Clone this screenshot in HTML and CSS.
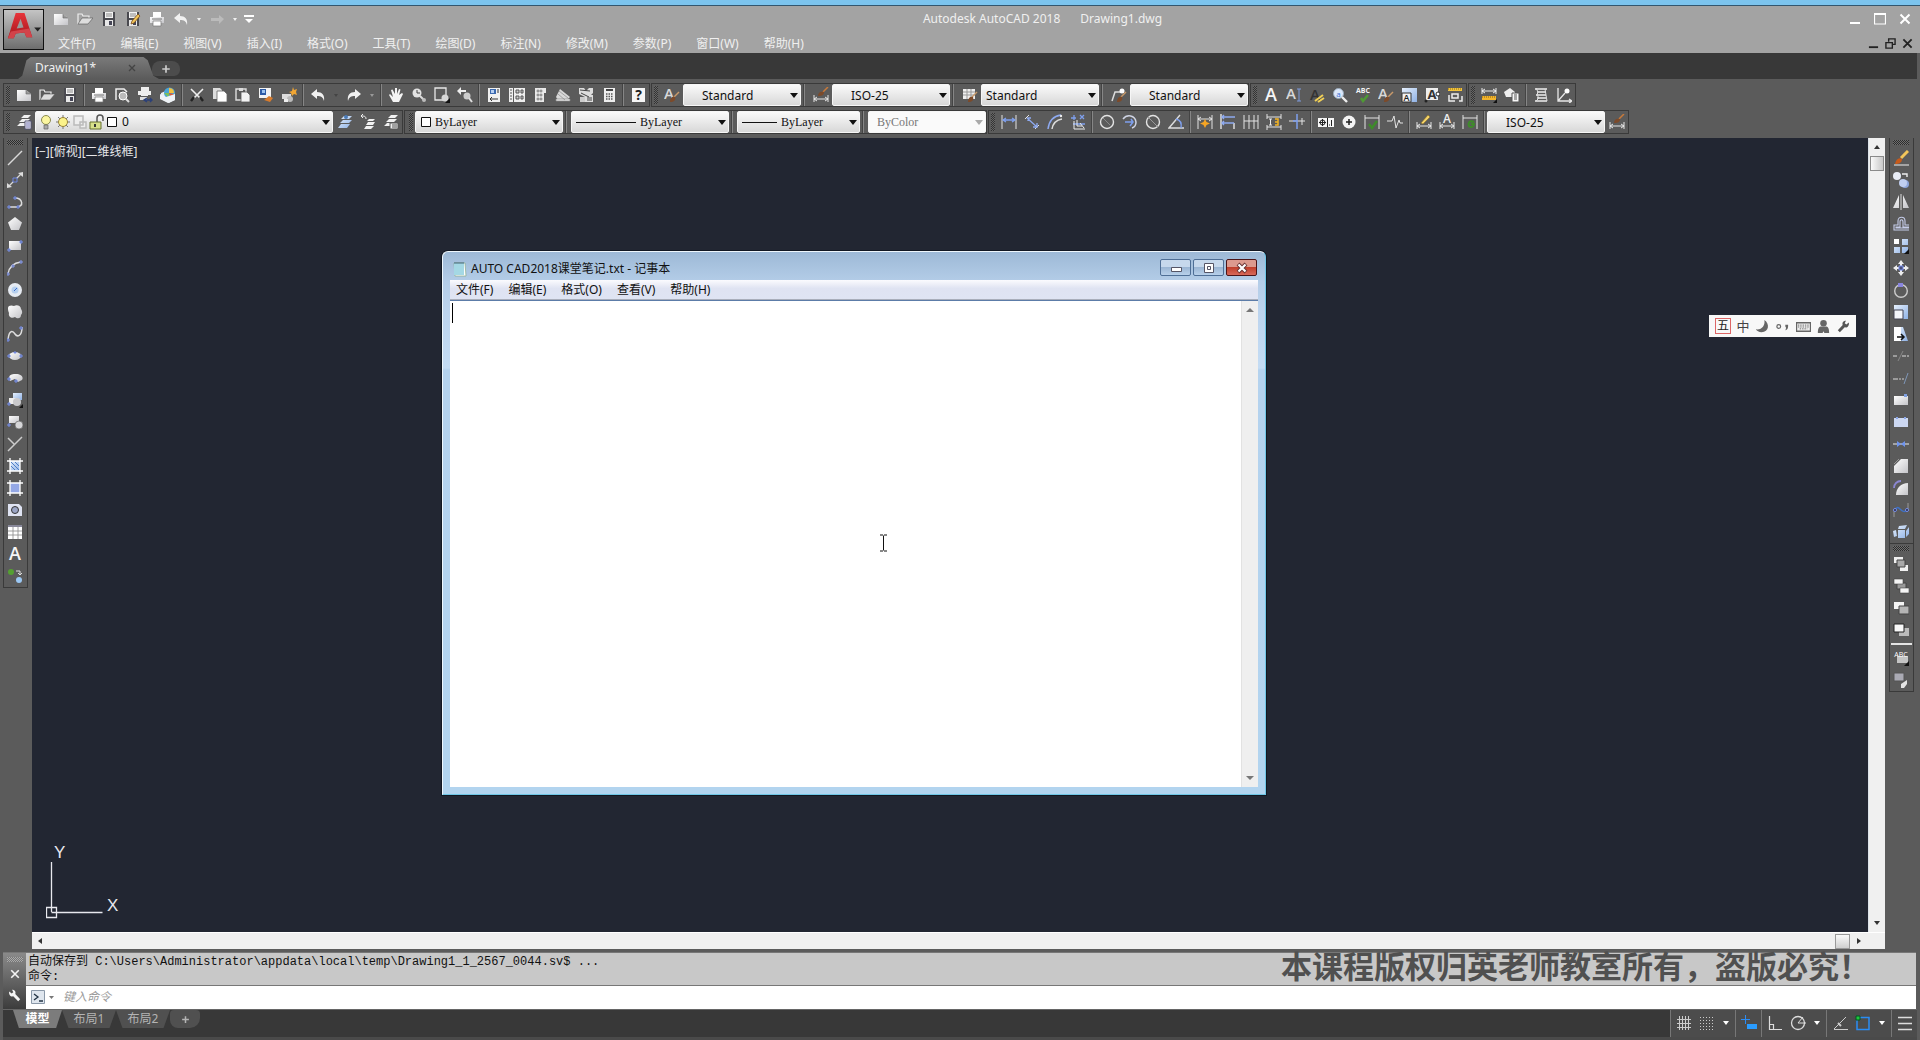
FILE: index.html
```html
<!DOCTYPE html>
<html lang="zh-CN">
<head>
<meta charset="utf-8">
<title>Autodesk AutoCAD 2018 - Drawing1.dwg</title>
<link rel="stylesheet" href="styles.css">
</head>
<body>
<svg class="paints" aria-hidden="true">
<defs>
<linearGradient id="gw" x1="0" y1="0" x2="1" y2="1"><stop offset="0" stop-color="#fff"/><stop offset="1" stop-color="#c4c4c8"/></linearGradient>
<linearGradient id="gb" x1="0" y1="0" x2="1" y2="1"><stop offset="0" stop-color="#e6f0fc"/><stop offset="1" stop-color="#8fb2e6"/></linearGradient>
<linearGradient id="gr" x1="0" y1="0" x2="0" y2="1"><stop offset="0" stop-color="#e8343a"/><stop offset="1" stop-color="#a3151c"/></linearGradient>
</defs>
</svg>
<svg class="symbols" aria-hidden="true">
<symbol id="new" viewBox="0 0 16 16"><path d="M1 3h9l5 4v7H1z" fill="url(#gw)"/><path d="M10 3v4h5" fill="#999" stroke="#666" stroke-width=".6"/></symbol>
<symbol id="open" viewBox="0 0 16 16"><path d="M1 13V3h4l1 2h6v2" fill="none" stroke="#eee" stroke-width="1.200"/><path d="M1 13l4-6h11l-5 6z" fill="#ddd" stroke="#555" stroke-width=".6"/></symbol>
<symbol id="save" viewBox="0 0 16 16"><path d="M2 1h12v14H2z" fill="#4a4a50"/><path d="M4 1h8v6H4z" fill="#f4f4f4"/><path d="M5 3h6M5 5h6" stroke="#888"/><path d="M4 9h8v6H4z" fill="#e8e8e8"/><path d="M8 10h3v4H8z" fill="#445"/></symbol>
<symbol id="saveas" viewBox="0 0 16 16"><use href="#save"/><path d="M7 10l6-7 2 2-6 7-3 1z" fill="#f0c55a" stroke="#7a4b1a" stroke-width=".8"/></symbol>
<symbol id="print" viewBox="0 0 16 16"><path d="M4 1h8v5H4z" fill="#fff"/><path d="M1 6h14v6H1z" fill="url(#gw)"/><path d="M3 8h10" stroke="#777"/><path d="M4 10h8v5H4z" fill="#fff" stroke="#777" stroke-width=".7"/></symbol>
<symbol id="undo" viewBox="0 0 16 16"><path d="M1 7l6-5v3c5 0 8 3 7 9-1-4-3-5-7-5v3z" fill="#f1f1f1"/></symbol>
<symbol id="redo" viewBox="0 0 16 16"><path d="M15 7L9 2v3C4 5 1 8 2 14c1-4 3-5 7-5v3z" fill="#f1f1f1"/></symbol>
<symbol id="redo2" viewBox="0 0 16 16"><path d="M15 8l-5-4v3H2v3h8v3z" fill="#bbb"/></symbol>
<symbol id="dn" viewBox="0 0 8 8"><path d="M1 2h6L4 6z" fill="currentColor"/></symbol>
<symbol id="dot" viewBox="0 0 8 8"><path d="M2 3h4L4 6z" fill="currentColor"/></symbol>
<symbol id="qat" viewBox="0 0 12 12"><path d="M1 2h10v2H1zM2 6h8l-4 4z" fill="#fff"/></symbol>
<symbol id="preview" viewBox="0 0 16 16"><path d="M2 13V2h8l3 3" fill="none" stroke="#eee" stroke-width="1.500"/><circle cx="9" cy="9" r="4" fill="#bbb" stroke="#fff"/><path d="M12 12l3 3" stroke="#ddd" stroke-width="2"/></symbol>
<symbol id="publish" viewBox="0 0 16 16"><path d="M4 0h8v4H4zM1 4h13v4H1zM4 8h7v1H4z" fill="#eee"/><path d="M3 10h7v3H3z" fill="#ddd"/><path d="M8 13h6M10 11l-3 2 3 2M13 11l2 2-2 2" fill="none" stroke="#2a3f78" stroke-width="1.400"/></symbol>
<symbol id="print3d" viewBox="0 0 16 16"><path d="M1 6l7-3 7 3v7l-6 3-8-4z" fill="#e8eef4"/><circle cx="9.500" cy="6" r="5.500" fill="#49a5d8"/><path d="M9 1c4 0 5 3 5 5L9 6z" fill="#f3c13d"/><path d="M9 6l5 1-3 4z" fill="#d6583a"/><path d="M4 6h5v5z" fill="#7bbf5a"/><path d="M0 7l6 3 9-3v6l-7 3-8-4z" fill="#eef2f6"/></symbol>
<symbol id="cut" viewBox="0 0 16 16"><path d="M2 2l9 9M14 2L5 11" stroke="#eee" stroke-width="1.600"/><path d="M5 10l-3 4M11 10l3 4" stroke="#222" stroke-width="2.400"/></symbol>
<symbol id="copy" viewBox="0 0 16 16"><path d="M1 1h7l2 2v9H1z" fill="#ddd"/><path d="M5 4h7l3 3v8H5z" fill="#fff" stroke="#666" stroke-width=".8"/></symbol>
<symbol id="paste" viewBox="0 0 16 16"><path d="M1 2h10v11H1z" fill="none" stroke="#ddd" stroke-width="1.400"/><path d="M4 1h4v3H4z" fill="#ddd"/><path d="M6 5h6l3 3v7H6z" fill="#f2f2f2" stroke="#555" stroke-width=".8"/></symbol>
<symbol id="match" viewBox="0 0 16 16"><path d="M1 1h12v10H1z" fill="#f3f3f3"/><path d="M2 2h6v6H2z" fill="#2c5aa5"/><path d="M4 3h3v3H4z" fill="#9cc3ee"/><path d="M6 13l5-4 4 2-3 4z" fill="#d77b2c"/></symbol>
<symbol id="bedit" viewBox="0 0 16 16"><path d="M1 7h9v5H1z" fill="#ddd"/><circle cx="9" cy="12" r="3" fill="#bbb"/><path d="M12 0l1 3 3-1-1 3 1 3-3-1-2 2-1-3-2-1 3-1z" fill="#f1a634"/><path d="M3 12h4v3H3z" fill="#eee"/></symbol>
<symbol id="pan" viewBox="0 0 16 16"><path d="M5 15L1 8l1-1 3 3L3 3l1.500-.5L7 7V1h2v6l2-5 1.500.5L11 8l3-2 1 1-4 8z" fill="#f4f4f4"/></symbol>
<symbol id="zoomrt" viewBox="0 0 16 16"><circle cx="6" cy="6" r="4.500" fill="#e2e2e2"/><path d="M6 3v3h3" stroke="#444" fill="none"/><path d="M9 9l4 4" stroke="#ddd" stroke-width="2"/><circle cx="13" cy="13" r="2" fill="#bbb"/></symbol>
<symbol id="zoomwin" viewBox="0 0 16 16"><path d="M1 1h11v12H1z" fill="none" stroke="#e8e8e8" stroke-width="1.300"/><circle cx="11" cy="11" r="3.500" fill="#d6d6d6"/><path d="M11 16h5v-5z" fill="#111"/></symbol>
<symbol id="zoomprev" viewBox="0 0 16 16"><path d="M0 4l4-4v3h5v2H4v3z" fill="#eee"/><circle cx="10" cy="9" r="3.500" fill="#ccc"/><path d="M12 11l3 4" stroke="#ddd" stroke-width="2"/></symbol>
<symbol id="props" viewBox="0 0 16 16"><path d="M2 1h12v14H2z" fill="#f0f0f0"/><path d="M4 2h6v5H4z" fill="#3b69b0"/><path d="M5 3h3v3H5z" fill="#b7d0f2"/><path d="M11 3h2M11 5h2M4 12h8M4 12l2-2M4 12l2 2" stroke="#333" fill="none"/></symbol>
<symbol id="dc" viewBox="0 0 16 16"><path d="M0 1h4v14H0zM5 1h11v14H5z" fill="#eee"/><path d="M1 3h2M1 6h2M1 9h2M1 12h2M7 3h3v3H7zM12 3h2v3h-2zM7 9h3v3H7zM12 9h2v3h-2z" fill="#ccc" stroke="#555"/></symbol>
<symbol id="tp" viewBox="0 0 16 16"><path d="M3 1h11v5h-2v9H3z" fill="#e8e8e8"/><path d="M5 3h2v2H5zM8 3h2v2H8zM5 7h2v2H5zM8 7h2v2H8zM5 11h2v2H5zM8 11h2v2H8z" fill="#aaa" stroke="#777" stroke-width=".5"/></symbol>
<symbol id="sheet" viewBox="0 0 16 16"><path d="M1 10l4-8 10 8-3 3H3z" fill="#d8d8d8"/><path d="M4 4l9 7M3 7l7 6M1 12h14v2H1z" fill="#f2f2f2" stroke="#888" stroke-width=".7"/></symbol>
<symbol id="markup" viewBox="0 0 16 16"><path d="M1 1h5l2 3 3-3h4v5l-2 2h2v7H7v-5L1 7z" fill="#ddd"/><path d="M2 3l10 1M3 6l8 4M9 11h5M9 13h5" fill="none" stroke="#444"/><path d="M2 10h5v5H2z" fill="#ccc"/></symbol>
<symbol id="calc" viewBox="0 0 16 16"><path d="M3 1h11v14H3z" fill="#eee"/><path d="M5 3h7" stroke="#444" stroke-width="2"/><path d="M5 7h7M5 9.500h7M5 12h7" stroke="#555" stroke-width="1.400" stroke-dasharray="1.500 1"/></symbol>
<symbol id="help" viewBox="0 0 16 16"><path d="M2 1h13v14H2z" fill="#f6f6f6"/><text x="8.500" y="13" text-anchor="middle" font-family="Open Sans, sans-serif" font-weight="700" font-size="14" fill="#222">?</text></symbol>
<symbol id="bigA" viewBox="0 0 16 16"><text x="8" y="14" text-anchor="middle" font-family="Open Sans, sans-serif" font-weight="600" font-size="18" fill="#f6f6f6">A</text></symbol>
<symbol id="smA" viewBox="0 0 16 16"><text x="5" y="12" text-anchor="middle" font-family="Open Sans, sans-serif" font-weight="600" font-size="15" fill="#d8d8d8">A</text></symbol>
<symbol id="brush" viewBox="0 0 16 16"><path d="M15 5l-5 5" stroke="#c99a6a" stroke-width="1.500"/><path d="M6 15c0-4 2-6 5-5 1 3-1 5-5 5z" fill="#7c4a2a"/></symbol>
<symbol id="tstyle" viewBox="0 0 16 16"><use href="#smA"/><use href="#brush"/></symbol>
<symbol id="dim" viewBox="0 0 16 16"><path d="M1 8v7M15 8v7M1 12h14M4 10l-3 2 3 2M12 10l3 2-3 2" fill="none" stroke="#e8e8e8"/></symbol>
<symbol id="dimstyle" viewBox="0 0 16 16"><use href="#dim"/><path d="M15 0l-5 5" stroke="#c97a3a" stroke-width="1.500"/><path d="M5 9c0-4 3-5 6-4 0 3-2 4-6 4z" fill="#7c4a2a"/></symbol>
<symbol id="tbstyle" viewBox="0 0 16 16"><path d="M1 2h12v10H1z" fill="#eee"/><path d="M1 5h12M1 8h12M5 2v10M9 2v10" stroke="#999"/><use href="#brush"/></symbol>
<symbol id="mlstyle" viewBox="0 0 16 16"><path d="M1 14L4 5h6" fill="none" stroke="#ddd" stroke-width="1.500"/><circle cx="11" cy="4" r="2.500" fill="#fff"/><use href="#brush"/></symbol>
<symbol id="text1" viewBox="0 0 16 16"><use href="#smA"/><path d="M11 2h4M13 2v12M11 14h4" stroke="#7e9bdc" fill="none"/></symbol>
<symbol id="tedit" viewBox="0 0 16 16"><text x="6" y="13" text-anchor="middle" font-family="Open Sans, sans-serif" font-weight="600" font-size="15" fill="#333">A</text><path d="M6 14l8-6M9 15l6-4" stroke="#f0cf56" stroke-width="2"/></symbol>
<symbol id="find" viewBox="0 0 16 16"><circle cx="6.500" cy="6.500" r="5" fill="#dce8fb" stroke="#9ab"/><text x="6.500" y="9.500" text-anchor="middle" font-family="Open Sans, sans-serif" font-size="8" fill="#3d6fd0">a</text><path d="M10 10l5 5" stroke="#eee" stroke-width="2.400"/></symbol>
<symbol id="spell" viewBox="0 0 16 16"><text x="8" y="6" text-anchor="middle" font-family="Open Sans, sans-serif" font-weight="700" font-size="7" fill="#f4f4f4">ABC</text><path d="M6 11l2 3 5-6" fill="none" stroke="#4f9a35" stroke-width="2.500"/></symbol>
<symbol id="tscale" viewBox="0 0 16 16"><path d="M1 1h15v14H8V8H1z" fill="url(#gb)"/><path d="M1 6h9v9H1z" fill="#f2f2f2" stroke="#333"/><text x="5.500" y="13.500" text-anchor="middle" font-family="Open Sans, sans-serif" font-weight="600" font-size="9" fill="#222">A</text></symbol>
<symbol id="tjust" viewBox="0 0 16 16"><path d="M2 1h12v12H2z" fill="#eee"/><text x="8" y="12" text-anchor="middle" font-family="Open Sans, sans-serif" font-weight="700" font-size="13" fill="#333">A</text><circle cx="14" cy="7" r="2" fill="#fff" stroke="#222"/><circle cx="2" cy="14" r="1.500" fill="#222"/></symbol>
<symbol id="tconv" viewBox="0 0 16 16"><path d="M1 1h14v3H1z" fill="#f3c43c"/><path d="M1 2h14" stroke="#8a6a14" stroke-dasharray="1 1"/><path d="M2 8v6h6M5 7h6v4H5zM12 14h3V9" fill="none" stroke="#eee" stroke-width="1.500"/></symbol>
<symbol id="dist" viewBox="0 0 16 16"><path d="M1 1v6M15 1v6M1 4h14M4 2L1 4l3 2M12 2l3 2-3 2" fill="none" stroke="#eee"/><path d="M1 9h14v4H1z" fill="#f3b52c"/><path d="M1 10h14" stroke="#8a6214" stroke-dasharray="1 1"/><path d="M12 16h4v-4z" fill="#111"/></symbol>
<symbol id="massp" viewBox="0 0 16 16"><path d="M0 5l6-4 5 4v5H2z" fill="#eee"/><path d="M8 6h7v9H8z" fill="#f8f8f8" stroke="#555"/><path d="M10 8h3M10 10h3M10 12h3" stroke="#555"/></symbol>
<symbol id="list" viewBox="0 0 16 16"><path d="M2 2h12M4 5h9M3 8h10M4 11h9M2 14h12" stroke="#eee" stroke-width="1.600"/><path d="M3 1l2 4-1 3 2 3-3 3M12 2l1 6 1 6" stroke="#ddd" fill="none"/></symbol>
<symbol id="idp" viewBox="0 0 16 16"><path d="M2 1v13h13M2 14L9 6M13 12l3 2-3 2" fill="none" stroke="#e8e8e8" stroke-width="1.300"/><circle cx="11" cy="4" r="2.500" fill="#fff"/></symbol>
<symbol id="layers" viewBox="0 0 16 16"><path d="M5 4l3-3h7l-3 3zM3 8l3-3h8l-3 3zM1 12l3-3h8l-3 3z" fill="#f1f1f1"/></symbol>
<symbol id="layprop" viewBox="0 0 16 16"><use href="#layers"/><path d="M9 7h6v8H9z" fill="#fff" stroke="#557"/><path d="M10 9h4M10 11h4M10 13h4" stroke="#66a"/></symbol>
<symbol id="laycur" viewBox="0 0 16 16"><path d="M4 5l3-3h8l-3 3zM3 9l3-3h9l-3 3zM1 14l3-4h9l-3 4z" fill="url(#gb)"/><circle cx="9" cy="3" r="2" fill="#4b7bb8"/></symbol>
<symbol id="layprev" viewBox="0 0 16 16"><path d="M7 7l2-2h6l-2 2zM6 11l2-3h7l-2 3zM4 15l2-3h8l-3 3z" fill="#f1f1f1"/><path d="M6 5C6 2 4 2 1 2l2-2M1 2l2 2" fill="none" stroke="#eee"/></symbol>
<symbol id="laystate" viewBox="0 0 16 16"><use href="#layers"/><path d="M7 9h8v6H7z" fill="#eee" stroke="#555"/><path d="M9 11h5M9 13h5" stroke="#555"/></symbol>
<symbol id="bulb" viewBox="0 0 16 16"><circle cx="8" cy="6" r="4.500" fill="#fbf6a0" stroke="#8a8a50"/><path d="M6 11h4v4H6z" fill="#aaa" stroke="#666" stroke-width=".7"/></symbol>
<symbol id="sun" viewBox="0 0 16 16"><path d="M8 1v14M1 8h14M3 3l10 10M13 3L3 13" stroke="#777"/><circle cx="8" cy="8" r="4.500" fill="#fbf28a" stroke="#99853a"/></symbol>
<symbol id="vpf" viewBox="0 0 16 16"><path d="M2 2h9v9H2zM8 8h6v6H8z" fill="#eee" stroke="#bbb" stroke-width="1.500"/></symbol>
<symbol id="lock" viewBox="0 0 16 16"><path d="M8 8V4c0-4 6-4 6 0v3" fill="none" stroke="#555" stroke-width="1.500"/><path d="M1 8h11v7H1z" fill="#d8e08a" stroke="#667030"/><path d="M6 10v3" stroke="#333" stroke-width="2"/></symbol>
<symbol id="swatch" viewBox="0 0 12 12"><path d="M1.500 1.500h9v9h-9z" fill="#fff" stroke="#111"/></symbol>
<symbol id="d1" viewBox="0 0 16 16"><path d="M1 1v14M15 1v14" stroke="#e4e4e4"/><path d="M2 6h12M5 4L2 6l3 2M11 4l3 2-3 2" fill="none" stroke="#7fa0ee" stroke-width="1.300"/></symbol>
<symbol id="d2" viewBox="0 0 16 16"><path d="M1 5l4-4M11 15l4-4" stroke="#e4e4e4"/><path d="M3 4l10 9M4 7V4h3M13 9v4h-4" fill="none" stroke="#8eaaf0" stroke-width="1.300"/></symbol>
<symbol id="d3" viewBox="0 0 16 16"><path d="M1 15C2 7 7 2 14 1" fill="none" stroke="#8eaaf0" stroke-width="1.500"/><path d="M5 15c1-6 4-9 10-10" fill="none" stroke="#ddd" stroke-width="1.500"/><circle cx="14" cy="2" r="1.200" fill="#eee"/></symbol>
<symbol id="d4" viewBox="0 0 16 16"><path d="M1 4h5M4 1v5M10 1l4 4M14 1l-4 4M3 10h12" stroke="#7fa0ee" stroke-width="1.300"/><path d="M4 7v8h11M7 6v6h5M10 9l4 5" fill="none" stroke="#eee"/></symbol>
<symbol id="d5" viewBox="0 0 16 16"><circle cx="8" cy="8" r="6.500" fill="none" stroke="#e4e4e4" stroke-width="1.400"/><path d="M4 4l7 7" stroke="#8a8a8a"/></symbol>
<symbol id="d6" viewBox="0 0 16 16"><path d="M1 5c4-5 12-4 13 3 0 3-1 5-4 6" fill="none" stroke="#cfd4e4" stroke-width="1.500"/><path d="M3 8h7M9 5l2 3-3 4" fill="none" stroke="#7fa0ee" stroke-width="1.500"/></symbol>
<symbol id="d7" viewBox="0 0 16 16"><circle cx="8" cy="8" r="6.500" fill="none" stroke="#e4e4e4" stroke-width="1.400"/><path d="M3 3l10 10" stroke="#9a9a9a"/></symbol>
<symbol id="d8" viewBox="0 0 16 16"><path d="M12 1L1 14h15" fill="none" stroke="#ddd" stroke-width="1.400"/><path d="M8 5c4 1 6 4 5 9" fill="none" stroke="#7fa0ee" stroke-width="1.400"/></symbol>
<symbol id="d9" viewBox="0 0 16 16"><path d="M1 1v14M15 1v14M1 5h14M4 3L1 5l3 2M12 3l3 2-3 2" fill="none" stroke="#e4e4e4"/><path d="M8 5l1.500 3L13 9.500 9.500 11 8 14l-1.500-3L3 9.500 6.500 8z" fill="#f5a524"/></symbol>
<symbol id="d10" viewBox="0 0 16 16"><path d="M1 0v15M14 9v6" stroke="#e4e4e4" stroke-width="1.400"/><path d="M2 3h13M2 9h12M4 1L2 3l2 2M4 7L2 9l2 2" fill="none" stroke="#8eaaf0" stroke-width="1.400"/></symbol>
<symbol id="d11" viewBox="0 0 16 16"><path d="M1 1v14M6 1v14M11 1v14M15 1v14M1 7h14" stroke="#e4e4e4"/></symbol>
<symbol id="d12" viewBox="0 0 16 16"><path d="M1 0v5M15 0v5M1 3h14M1 11v5M15 11v5M1 13h14" stroke="#e4e4e4"/><path d="M3 5h3M3 11h3M4.500 5v6" stroke="#eee"/><path d="M9 5h3v6H9M9 8h3" fill="none" stroke="#f5b524" stroke-width="1.500"/></symbol>
<symbol id="d13" viewBox="0 0 16 16"><path d="M0 7h16M13 4v7" stroke="#e4e4e4"/><path d="M8 0v15M4 7h4" stroke="#7fa0ee" stroke-width="1.500"/></symbol>
<symbol id="tol" viewBox="0 0 16 16"><path d="M0 4h16v9H0z" fill="#f6f6f6"/><circle cx="4.500" cy="8.500" r="2.500" fill="none" stroke="#222"/><path d="M4.500 5v7M1 8.500h7M9.500 4v9M11 11h1M13.500 6v6" stroke="#222"/></symbol>
<symbol id="ctr" viewBox="0 0 16 16"><circle cx="8" cy="8" r="6.500" fill="#f4f4f4"/><path d="M5 8h6M8 5v6" stroke="#222" stroke-width="1.500"/></symbol>
<symbol id="insp" viewBox="0 0 16 16"><path d="M1 1v14M15 1v14M1 4h14" stroke="#e4e4e4"/><path d="M5 10l3 4 5-7" fill="none" stroke="#3e8b2a" stroke-width="2.500"/></symbol>
<symbol id="jog" viewBox="0 0 16 16"><path d="M0 7h5l2-5 2 12 3-8 1 3h3" fill="none" stroke="#e4e4e4"/></symbol>
<symbol id="dedit" viewBox="0 0 16 16"><use href="#dim"/><path d="M5 9l7-8 2 2-7 7z" fill="#f3d36a" stroke="#8a6a14" stroke-width=".5"/></symbol>
<symbol id="dtedit" viewBox="0 0 16 16"><use href="#dim"/><text x="8" y="9" text-anchor="middle" font-family="Open Sans, sans-serif" font-weight="600" font-size="12" fill="#eee">A</text></symbol>
<symbol id="dupd" viewBox="0 0 16 16"><path d="M1 1v14M15 1v14M1 4h14" stroke="#e4e4e4"/><path d="M12 8c-5-2-6 1-5 4 2 2 5 1 5-2h-3" fill="none" stroke="#3e8b2a" stroke-width="2"/></symbol>
<symbol id="line" viewBox="0 0 16 16"><path d="M1 15L15 1" stroke="#d8d8d8" stroke-width="1.400"/></symbol>
<symbol id="xline" viewBox="0 0 16 16"><path d="M2 14L14 2" stroke="#d8d8d8" stroke-width="1.200"/><path d="M16 0v5l-5-4zM0 16v-5l5 4z" fill="#ddd"/><path d="M6 6h4v4H6z" fill="#5b5b5b" stroke="#6f86e0"/></symbol>
<symbol id="pline" viewBox="0 0 16 16"><path d="M1 13h9c7 0 6-9-2-9" fill="none" stroke="#ddd" stroke-width="1.500"/><path d="M1 12h2v2H1zM7 3h2v2H7zM10 12h2v2h-2z" fill="#566" stroke="#7a90ee"/></symbol>
<symbol id="poly" viewBox="0 0 16 16"><path d="M8 1l7 5.500L12 14H4L1 6.500z" fill="url(#gw)"/></symbol>
<symbol id="rect" viewBox="0 0 16 16"><path d="M2 3h12v9H2z" fill="url(#gw)"/><path d="M1 11h2v2H1zM13 3h2v2h-2z" fill="#566" stroke="#7a90ee"/></symbol>
<symbol id="arc" viewBox="0 0 16 16"><path d="M1 14C2 7 6 3 14 2" fill="none" stroke="#ddd" stroke-width="1.400"/><path d="M0 13h2v2H0zM5 5h2v2H5zM13 1h2v2h-2z" fill="#566" stroke="#8a9aee"/></symbol>
<symbol id="circ" viewBox="0 0 16 16"><circle cx="8" cy="8" r="7" fill="#e6ebf2"/><circle cx="8" cy="8" r="3.500" fill="#b6d0ee"/><path d="M7 9l3-3" stroke="#3d6fd0"/></symbol>
<symbol id="rev" viewBox="0 0 16 16"><path d="M1 4c0-3 4-3 6-2 3-2 7 0 7 3 2 3 1 5 0 6 0 4-4 4-6 2-3 2-7 0-6-4-1-2-1-4-1-5z" fill="url(#gw)"/></symbol>
<symbol id="spline" viewBox="0 0 16 16"><path d="M1 14C2 3 6 5 8 8s7 3 7-7" fill="none" stroke="#ddd" stroke-width="1.500"/><path d="M0 13h2v2H0zM13 1h2v2h-2z" fill="#566" stroke="#7a90ee"/></symbol>
<symbol id="ell" viewBox="0 0 16 16"><ellipse cx="8" cy="8" rx="6" ry="4" fill="url(#gw)"/><path d="M1 7h2v2H1zM13 7h2v2h-2zM7 4h2v1H7z" fill="#566" stroke="#7a90ee"/></symbol>
<symbol id="ella" viewBox="0 0 16 16"><path d="M3 11C0 4 6 4 9 4c5 0 8 3 6 6l-4 2-3-3z" fill="url(#gw)"/><path d="M1 8h2v2H1zM8 10h2v2H8z" fill="#566" stroke="#7a90ee"/></symbol>
<symbol id="ins" viewBox="0 0 16 16"><path d="M6 1h9v7H6z" fill="url(#gb)"/><path d="M2 6h8v6H2z" fill="#eee"/><circle cx="10" cy="10" r="4" fill="#c9c9cc"/><path d="M1 11h2v2H1z" fill="#566" stroke="#7a90ee"/><path d="M12 16h4v-4z" fill="#111"/></symbol>
<symbol id="blk" viewBox="0 0 16 16"><path d="M2 2h10v7H2z" fill="url(#gw)"/><circle cx="12" cy="11" r="4" fill="#d6d6d8" stroke="#666" stroke-width=".7"/><path d="M1 10h2v2H1z" fill="#566" stroke="#7a90ee"/></symbol>
<symbol id="pt" viewBox="0 0 16 16"><path d="M1 2l6 6M15 1L1 15" stroke="#ccc" stroke-width="1.500"/></symbol>
<symbol id="hatch" viewBox="0 0 16 16"><path d="M3 3h10v10H3z" fill="url(#gb)"/><path d="M4 4l8 8M8 4l4 4M4 8l4 4" stroke="#4f7fc6"/><path d="M3 0v16M13 0v16M0 3h16M0 13h16" stroke="#fff" stroke-width="1.300"/></symbol>
<symbol id="grad" viewBox="0 0 16 16"><path d="M3 3h10v10H3z" fill="#94a8e6"/><path d="M3 0v16M13 0v16M0 3h16M0 13h16" stroke="#fff" stroke-width="1.300"/></symbol>
<symbol id="region" viewBox="0 0 16 16"><path d="M1 2h11l3 3v9H1z" fill="#dfe3f2"/><circle cx="8" cy="8" r="3.500" fill="#9aa4c4" stroke="#333"/></symbol>
<symbol id="table" viewBox="0 0 16 16"><path d="M1 1h14v2H1z" fill="#889"/><path d="M1 3h14v12H1z" fill="#fff"/><path d="M1 7h14M1 11h14M6 3v12M11 3v12" stroke="#888" stroke-width=".8"/></symbol>
<symbol id="addsel" viewBox="0 0 16 16"><circle cx="4" cy="4" r="3" fill="#55a032"/><circle cx="12" cy="12" r="3" fill="#9cc8f4"/><path d="M9 3h4v4M11 5l2 2 2-2" fill="none" stroke="#ddd"/></symbol>
<symbol id="erase" viewBox="0 0 16 16"><path d="M15 1L8 8" stroke="#f3c65a" stroke-width="3"/><path d="M2 14c1-5 4-7 7-5 0 4-3 5-7 5z" fill="#c85a1a"/><path d="M1 15h15" stroke="#eee"/></symbol>
<symbol id="mcopy" viewBox="0 0 16 16"><circle cx="4" cy="4" r="4" fill="#e8ecf6"/><circle cx="12" cy="12" r="4" fill="#8fa6dc"/><circle cx="10" cy="11" r="4" fill="#c0cef0"/><path d="M9 2h5v3" fill="none" stroke="#eee" stroke-width="1.400"/></symbol>
<symbol id="mirror" viewBox="0 0 16 16"><path d="M6 1v13H0zM10 1v13h6z" fill="url(#gw)"/><path d="M8 0v16" stroke="#ddd"/></symbol>
<symbol id="offset" viewBox="0 0 16 16"><path d="M16 14H1V9h4V5c0-5 7-5 7 0v4h4M16 12H3v-1h4V6c0-3 3-3 3 0v5h6" fill="none" stroke="#c6cdea" stroke-width="1.100"/></symbol>
<symbol id="array" viewBox="0 0 16 16"><path d="M1 1h5v5H1z" fill="#fff"/><path d="M9 1h6v6H9zM1 9h6v6H1zM9 9h6v6H9z" fill="url(#gb)"/><path d="M11 16h5v-5z" fill="#111"/></symbol>
<symbol id="move" viewBox="0 0 16 16"><path d="M8 0l3 4H9v2H7V4H5zM8 16l3-4H9v-2H7v2H5zM0 8l4-3v2h2v2H4v2zM16 8l-4-3v2h-2v2h2v2z" fill="#eee"/><path d="M6 6h4v4H6z" fill="#4a5078" stroke="#7a90ee"/></symbol>
<symbol id="rot" viewBox="0 0 16 16"><circle cx="8" cy="9" r="6.300" fill="none" stroke="#ccc" stroke-width="1.400"/><path d="M5 1h5v4H5z" fill="#8a86e0"/></symbol>
<symbol id="scale" viewBox="0 0 16 16"><path d="M1 1h14v14H9V7H1z" fill="url(#gb)"/><path d="M1 6h9v9H1z" fill="#f4f6fb" stroke="#445"/></symbol>
<symbol id="stretch" viewBox="0 0 16 16"><path d="M1 1h9l5 14H1z" fill="url(#gb)"/><path d="M1 1h7v14H1z" fill="#fff"/><path d="M4 11h7M8 8l3 3-3 3" fill="none" stroke="#111" stroke-width="1.500"/></symbol>
<symbol id="trim" viewBox="0 0 16 16"><path d="M0 8h5M9 8h7" stroke="#ddd" stroke-dasharray="4 1"/><path d="M5 13l5-10" stroke="#888"/></symbol>
<symbol id="extend" viewBox="0 0 16 16"><path d="M0 9h5" stroke="#ddd"/><path d="M6 9h6" stroke="#ccc" stroke-dasharray="2 1"/><path d="M11 14l4-11" stroke="#7f97b8"/></symbol>
<symbol id="brkpt" viewBox="0 0 16 16"><path d="M1 4h14v9H1z" fill="url(#gw)"/><path d="M11 2h3v3h-3z" fill="#7fa0e0"/></symbol>
<symbol id="brk" viewBox="0 0 16 16"><path d="M1 4h14v9H1z" fill="#cdd8f2"/><path d="M3 3h2v2H3zM11 3h2v2h-2z" fill="#8aa6e8"/></symbol>
<symbol id="join" viewBox="0 0 16 16"><path d="M0 8h16" stroke="#eee"/><path d="M4 5l4 3-4 3zM12 5L8 8l4 3z" fill="#6f94ee"/></symbol>
<symbol id="cham" viewBox="0 0 16 16"><path d="M1 15V8l7-7h7v14z" fill="url(#gw)"/><path d="M1 6l5-5" stroke="#999"/></symbol>
<symbol id="fill" viewBox="0 0 16 16"><path d="M3 15C3 8 8 3 15 3v12z" fill="url(#gw)"/><path d="M1 8c0-4 3-7 7-7" fill="none" stroke="#8a86d0" stroke-width="1.800"/></symbol>
<symbol id="blend" viewBox="0 0 16 16"><path d="M1 15V7M15 9V1" stroke="#999"/><path d="M2 8c4-8 6 6 12 0" fill="none" stroke="#3f72c6" stroke-width="1.500"/><circle cx="2" cy="8" r="1.500" fill="#223" stroke="#7a90ee"/><circle cx="14" cy="8" r="1.500" fill="#223" stroke="#7a90ee"/></symbol>
<symbol id="expl" viewBox="0 0 16 16"><path d="M0 7l3-1 1 6-3 1zM5 6h7v8H5zM6 2l8-1-2 4H5zM13 7l3-4v7l-3 3z" fill="url(#gb)"/></symbol>
<symbol id="o1" viewBox="0 0 16 16"><path d="M1 1h9v6H1zM7 9h8v6H7z" fill="#f0f0f0"/><path d="M4 4h8v7H4z" fill="#a8a8a8" stroke="#444"/></symbol>
<symbol id="o2" viewBox="0 0 16 16"><path d="M4 5h9v6H4z" fill="#999" stroke="#444"/><path d="M1 1h9v5H1zM7 10h9v5H7z" fill="#f4f4f4" stroke="#444" stroke-width=".6"/></symbol>
<symbol id="o3" viewBox="0 0 16 16"><path d="M1 2h10v7H1z" fill="#f4f4f4"/><path d="M6 6h10v8H6z" fill="#b4b4b4" stroke="#444"/></symbol>
<symbol id="o4" viewBox="0 0 16 16"><path d="M6 6h10v8H6z" fill="#bbb"/><path d="M1 2h10v8H1z" fill="#f8f8f8" stroke="#222"/></symbol>
<symbol id="o5" viewBox="0 0 16 16"><path d="M4 6h11v7H4z" fill="#c4c4c4"/><text x="8" y="7" text-anchor="middle" font-family="Open Sans, sans-serif" font-size="7" fill="#fff">ABC</text><path d="M11 16h5v-5z" fill="#111"/></symbol>
<symbol id="o6" viewBox="0 0 16 16"><path d="M1 1h10v8H1z" fill="#aaaab4" stroke="#555"/><path d="M8 12l6-4v4l-3 4H8z" fill="#e4e4e4"/></symbol>
<symbol id="wrench" viewBox="0 0 16 16"><path d="M14.500 3l-3 2.500-2-1.500 1.500-3c-3 0-5 2-4 5l-6 6.500 2.500 2.500L9.500 9c3 1 6-2 5-6z" fill="currentColor"/></symbol>
<symbol id="wrench2" viewBox="0 0 16 16"><path d="M1.500 3l3 2.500 2-1.500L5 1c3 0 5 2 4 5l6 6.500-2.500 2.500L6.500 9c-3 1-6-2-5-6z" fill="currentColor"/></symbol>
<symbol id="min" viewBox="0 0 12 12"><path d="M1 9h10v2H1z" fill="currentColor"/></symbol>
<symbol id="max" viewBox="0 0 12 12"><path d="M.5 1h11v10H.5z" fill="none" stroke="currentColor" stroke-width="1.200"/><path d="M0 1h12" stroke="currentColor" stroke-width="2"/></symbol>
<symbol id="x" viewBox="0 0 12 12"><path d="M1.500 1.500l9 9M10.500 1.500l-9 9" stroke="currentColor" stroke-width="2"/></symbol>
<symbol id="rest" viewBox="0 0 12 12"><path d="M4 4V1h7v6H8M1 5h7v6H1z" fill="none" stroke="currentColor" stroke-width="1.500"/></symbol>
<symbol id="plus" viewBox="0 0 12 12"><path d="M6 1.500v9M1.500 6h9" stroke="currentColor" stroke-width="2"/></symbol>
</svg>

<header class="head">
  <button class="logo" aria-label="应用程序菜单">
    <svg viewBox="0 0 40 40"><path d="M4 29L12 3h9l8 25h-6l-2-5-9 1-2 5z" fill="url(#gr)"/><path d="M13 19l4-10 3 9z" fill="#9a9a9a"/><path d="M4 29l3-7 19-3 3 9h-6l-2-5-9 1-2 5z" fill="#d2434a"/><path d="M31 18h7l-3.500 4z" fill="#222"/></svg>
  </button>
  <div class="head-main">
    <div class="head-top">
      <div class="qat">
        <button aria-label="新建"><svg><use href="#new"/></svg></button>
        <button aria-label="打开"><svg><use href="#open"/></svg></button>
        <button aria-label="保存"><svg><use href="#save"/></svg></button>
        <button aria-label="另存为"><svg><use href="#saveas"/></svg></button>
        <button aria-label="打印"><svg><use href="#print"/></svg></button>
        <button aria-label="放弃"><svg><use href="#undo"/></svg></button>
        <button class="nar" aria-label="放弃列表"><svg><use href="#dot"/></svg></button>
        <button aria-label="重做"><svg><use href="#redo2"/></svg></button>
        <button class="nar" aria-label="重做列表"><svg><use href="#dot"/></svg></button>
        <button class="cust" aria-label="自定义"><svg><use href="#qat"/></svg></button>
      </div>
      <div class="title"><span>Autodesk AutoCAD 2018</span><span>Drawing1.dwg</span></div>
      <div class="wctl">
        <button aria-label="最小化"><svg><use href="#min"/></svg></button>
        <button aria-label="最大化"><svg><use href="#max"/></svg></button>
        <button aria-label="关闭"><svg><use href="#x"/></svg></button>
      </div>
    </div>
    <div class="head-bottom">
      <nav class="menu"><button>文件(F)</button><button>编辑(E)</button><button>视图(V)</button><button>插入(I)</button><button>格式(O)</button><button>工具(T)</button><button>绘图(D)</button><button>标注(N)</button><button>修改(M)</button><button>参数(P)</button><button>窗口(W)</button><button>帮助(H)</button></nav>
      <div class="mctl">
        <button aria-label="最小化图形"><svg><use href="#min"/></svg></button>
        <button aria-label="还原图形"><svg><use href="#rest"/></svg></button>
        <button aria-label="关闭图形"><svg><use href="#x"/></svg></button>
      </div>
    </div>
  </div>
</header>

<div class="ftabs">
  <div class="ftab"><span>Drawing1*</span><button aria-label="关闭标签"><svg><use href="#x"/></svg></button></div>
  <button class="fnew" aria-label="新图形"><svg><use href="#plus"/></svg></button>
</div>

<div class="bars">
  <div class="bar-row">
    <div class="bar"><i class="grip"></i>
      <button aria-label="新建"><svg><use href="#new"/></svg></button><button aria-label="打开"><svg><use href="#open"/></svg></button><button aria-label="保存"><svg><use href="#save"/></svg></button><i class="sep"></i>
      <button aria-label="打印"><svg><use href="#print"/></svg></button><button aria-label="打印预览"><svg><use href="#preview"/></svg></button><button aria-label="发布"><svg><use href="#publish"/></svg></button><button aria-label="三维打印"><svg><use href="#print3d"/></svg></button><i class="sep"></i>
      <button aria-label="剪切"><svg><use href="#cut"/></svg></button><button aria-label="复制"><svg><use href="#copy"/></svg></button><button aria-label="粘贴"><svg><use href="#paste"/></svg></button><button aria-label="特性匹配"><svg><use href="#match"/></svg></button><button aria-label="块编辑器"><svg><use href="#bedit"/></svg></button><i class="sep"></i>
      <button aria-label="放弃"><svg><use href="#undo"/></svg></button><button class="nar dark" aria-label="放弃列表"><svg><use href="#dot"/></svg></button><button aria-label="重做"><svg><use href="#redo"/></svg></button><button class="nar" aria-label="重做列表"><svg><use href="#dot"/></svg></button><i class="sep"></i>
      <button aria-label="平移"><svg><use href="#pan"/></svg></button><button aria-label="实时缩放"><svg><use href="#zoomrt"/></svg></button><button aria-label="窗口缩放"><svg><use href="#zoomwin"/></svg></button><button aria-label="缩放上一个"><svg><use href="#zoomprev"/></svg></button><i class="sep"></i>
      <button aria-label="特性"><svg><use href="#props"/></svg></button><button aria-label="设计中心"><svg><use href="#dc"/></svg></button><button aria-label="工具选项板"><svg><use href="#tp"/></svg></button><button aria-label="图纸集"><svg><use href="#sheet"/></svg></button><button aria-label="标记集"><svg><use href="#markup"/></svg></button><button aria-label="计算器"><svg><use href="#calc"/></svg></button><i class="sep"></i>
      <button aria-label="帮助"><svg><use href="#help"/></svg></button>
    </div>
    <div class="bar"><i class="grip"></i>
      <button aria-label="文字样式"><svg><use href="#tstyle"/></svg></button><div class="combo std"><select aria-label="文字样式"><option>Standard</option></select></div><i class="sep wide"></i>
      <button aria-label="标注样式"><svg><use href="#dimstyle"/></svg></button><div class="combo std"><select aria-label="标注样式"><option>ISO-25</option></select></div><i class="sep wide"></i>
      <button aria-label="表格样式"><svg><use href="#tbstyle"/></svg></button><div class="combo std tight"><select aria-label="表格样式"><option>Standard</option></select></div><i class="sep wide"></i>
      <button aria-label="多重引线样式"><svg><use href="#mlstyle"/></svg></button><div class="combo std"><select aria-label="多重引线样式"><option>Standard</option></select></div>
    </div>
    <div class="bar"><i class="grip"></i>
      <button aria-label="多行文字"><svg><use href="#bigA"/></svg></button><button aria-label="单行文字"><svg><use href="#text1"/></svg></button><button aria-label="编辑文字"><svg><use href="#tedit"/></svg></button><button aria-label="查找"><svg><use href="#find"/></svg></button><button aria-label="拼写检查"><svg><use href="#spell"/></svg></button><button aria-label="文字样式"><svg><use href="#tstyle"/></svg></button><button aria-label="缩放文字"><svg><use href="#tscale"/></svg></button><button aria-label="对正文字"><svg><use href="#tjust"/></svg></button><button aria-label="转换距离"><svg><use href="#tconv"/></svg></button>
    </div>
    <div class="bar"><i class="grip"></i>
      <button aria-label="距离"><svg><use href="#dist"/></svg></button><button aria-label="质量特性"><svg><use href="#massp"/></svg></button><i class="sep"></i><button aria-label="列表"><svg><use href="#list"/></svg></button><button aria-label="定位点"><svg><use href="#idp"/></svg></button>
    </div>
  </div>
  <div class="bar-row">
    <div class="bar"><i class="grip"></i>
      <button aria-label="图层特性"><svg><use href="#layprop"/></svg></button>
      <div class="combo layer"><svg><use href="#bulb"/></svg><svg><use href="#sun"/></svg><svg><use href="#vpf"/></svg><svg><use href="#lock"/></svg><svg class="sw"><use href="#swatch"/></svg><select aria-label="图层"><option>0</option></select></div>
      <button aria-label="置为当前"><svg><use href="#laycur"/></svg></button><button aria-label="上一个图层"><svg><use href="#layprev"/></svg></button><button aria-label="图层状态"><svg><use href="#laystate"/></svg></button>
    </div>
    <div class="bar by"><i class="grip"></i>
      <div class="combo color"><svg class="sw"><use href="#swatch"/></svg><select aria-label="颜色"><option>ByLayer</option></select></div><i class="sep wide"></i>
      <div class="combo ltype"><i class="rule"></i><select aria-label="线型"><option>ByLayer</option></select></div><i class="sep wide"></i>
      <div class="combo lweight"><i class="rule"></i><select aria-label="线宽"><option>ByLayer</option></select></div><i class="sep wide"></i>
      <div class="combo off"><select aria-label="打印样式" disabled><option>ByColor</option></select></div>
    </div>
    <div class="bar"><i class="grip"></i>
      <button aria-label="线性"><svg><use href="#d1"/></svg></button><button aria-label="对齐"><svg><use href="#d2"/></svg></button><button aria-label="弧长"><svg><use href="#d3"/></svg></button><button aria-label="坐标"><svg><use href="#d4"/></svg></button><i class="sep"></i>
      <button aria-label="半径"><svg><use href="#d5"/></svg></button><button aria-label="折弯"><svg><use href="#d6"/></svg></button><button aria-label="直径"><svg><use href="#d7"/></svg></button><button aria-label="角度"><svg><use href="#d8"/></svg></button><i class="sep"></i>
      <button aria-label="快速标注"><svg><use href="#d9"/></svg></button><button aria-label="基线"><svg><use href="#d10"/></svg></button><button aria-label="连续"><svg><use href="#d11"/></svg></button><button aria-label="等距标注"><svg><use href="#d12"/></svg></button><button aria-label="折断标注"><svg><use href="#d13"/></svg></button><i class="sep"></i>
      <button aria-label="公差"><svg><use href="#tol"/></svg></button><button aria-label="圆心标记"><svg><use href="#ctr"/></svg></button><button aria-label="检验"><svg><use href="#insp"/></svg></button><button aria-label="折弯线性"><svg><use href="#jog"/></svg></button><i class="sep"></i>
      <button aria-label="编辑标注"><svg><use href="#dedit"/></svg></button><button aria-label="编辑标注文字"><svg><use href="#dtedit"/></svg></button><button aria-label="标注更新"><svg><use href="#dupd"/></svg></button><i class="sep"></i>
      <div class="combo std"><select aria-label="当前标注样式"><option>ISO-25</option></select></div><button aria-label="标注样式"><svg><use href="#dimstyle"/></svg></button>
    </div>
  </div>
</div>

<main class="work">
  <div class="side">
    <i class="hgrip"></i>
    <button aria-label="直线"><svg><use href="#line"/></svg></button><button aria-label="构造线"><svg><use href="#xline"/></svg></button><button aria-label="多段线"><svg><use href="#pline"/></svg></button><button aria-label="多边形"><svg><use href="#poly"/></svg></button><button aria-label="矩形"><svg><use href="#rect"/></svg></button><button aria-label="圆弧"><svg><use href="#arc"/></svg></button><button aria-label="圆"><svg><use href="#circ"/></svg></button><button aria-label="修订云线"><svg><use href="#rev"/></svg></button><button aria-label="样条曲线"><svg><use href="#spline"/></svg></button><button aria-label="椭圆"><svg><use href="#ell"/></svg></button><button aria-label="椭圆弧"><svg><use href="#ella"/></svg></button><button aria-label="插入块"><svg><use href="#ins"/></svg></button><button aria-label="创建块"><svg><use href="#blk"/></svg></button><button aria-label="点"><svg><use href="#pt"/></svg></button><button aria-label="图案填充"><svg><use href="#hatch"/></svg></button><button aria-label="渐变色"><svg><use href="#grad"/></svg></button><button aria-label="面域"><svg><use href="#region"/></svg></button><button aria-label="表格"><svg><use href="#table"/></svg></button><button aria-label="多行文字"><svg><use href="#bigA"/></svg></button><button aria-label="添加选定对象"><svg><use href="#addsel"/></svg></button>
  </div>

  <div class="view">
    <section class="canvas">
      <div class="vlabel">[−][俯视][二维线框]</div>

      <div class="ucs">
        <svg viewBox="0 0 80 76"><path d="M5.500 67V17M5.500 67.500h51M.5 62.500h10v10H.5z" fill="none" stroke="#e8e8ee" stroke-width="1.300"/><text x="8" y="13">Y</text><text x="61" y="66">X</text></svg>
      </div>

      <div class="ime">
        <span class="wu">五</span>
        <span>中</span>
        <svg viewBox="0 0 16 16"><path d="M10 1c6 4 5 13-3 13-3 0-5-1-6-3 6 1 10-4 9-10z" fill="#666"/></svg>
        <svg viewBox="0 0 16 16"><circle cx="4" cy="8" r="2" fill="none" stroke="#666" stroke-width="1.300"/><path d="M11 6h3c0 3 0 5-3 6 1-2 1-3 0-4z" fill="#666"/></svg>
        <svg viewBox="0 0 16 16"><path d="M.5 4h15v9H.5z" fill="#eee" stroke="#666" stroke-width="1.500"/><path d="M2 6.500h12M2 8.500h12M4 10.500h8" stroke="#666" stroke-dasharray="1.500 1"/></svg>
        <svg viewBox="0 0 16 16"><circle cx="8" cy="4.500" r="3.500" fill="#666"/><path d="M2 15c0-5 1-7 4-7h4c3 0 4 2 4 7H9l-1-2-1 2z" fill="#666"/></svg>
        <svg class="wr"><use href="#wrench"/></svg>
      </div>

      <section class="note">
        <div class="note-head">
          <svg class="pad" viewBox="0 0 14 16"><path d="M1 2h11l1 13H2z" fill="#fdfdfd" stroke="#8a8" stroke-width=".7"/><path d="M1 2h10v12H1z" fill="#a4d8e4"/><path d="M2 1v2M4 1v2M6 1v2M8 1v2M10 1v2" stroke="#467"/></svg>
          <h1>AUTO CAD2018课堂笔记.txt - 记事本</h1>
          <button aria-label="最小化"><svg viewBox="0 0 14 12"><path d="M2.500 5.500h10v4h-10z" fill="#fff" stroke="#556"/></svg></button>
          <button aria-label="最大化"><svg viewBox="0 0 14 12"><path d="M2.500 1.500h9v9h-9z" fill="#fff" stroke="#556"/><path d="M5.500 4.500h3v3h-3z" fill="#fff" stroke="#556"/></svg></button>
          <button class="close" aria-label="关闭"><svg viewBox="0 0 14 12"><path d="M3 2l8 8M11 2l-8 8" stroke="#633" stroke-width="4"/><path d="M3.500 2.500l7 7M10.500 2.500l-7 7" stroke="#fff" stroke-width="2.200"/></svg></button>
        </div>
        <nav class="note-menu"><button>文件(F)</button><button>编辑(E)</button><button>格式(O)</button><button>查看(V)</button><button>帮助(H)</button></nav>
        <div class="note-body">
          <textarea aria-label="正文"></textarea>
          <div class="note-scroll"><svg><path d="M0 5l4-4 4 4z" fill="#777"/></svg><svg><path d="M0 1h8L4 5z" fill="#777"/></svg></div>
          <i class="caret"></i>
        </div>
      </section>

      <svg class="ibeam" viewBox="0 0 9 18"><path d="M1 1h3M5 1h3M4.500 1.500v15M1 17h3M5 17h3" stroke="#111" fill="none"/></svg>
    </section>
    <div class="vscroll"><svg><path d="M1 6l3-4 3 4z" fill="#333"/></svg><i></i><svg class="end"><path d="M1 2h6L4 6z" fill="#333"/></svg></div>
    <div class="hscroll"><svg><path d="M6 1L2 4l4 3z" fill="#333"/></svg><i></i><svg><path d="M2 1l4 3-4 3z" fill="#333"/></svg></div>
  </div>

  <div class="side-right">
    <div class="side">
      <i class="hgrip"></i>
      <button aria-label="删除"><svg><use href="#erase"/></svg></button><button aria-label="复制对象"><svg><use href="#mcopy"/></svg></button><button aria-label="镜像"><svg><use href="#mirror"/></svg></button><button aria-label="偏移"><svg><use href="#offset"/></svg></button><button aria-label="阵列"><svg><use href="#array"/></svg></button><button aria-label="移动"><svg><use href="#move"/></svg></button><button aria-label="旋转"><svg><use href="#rot"/></svg></button><button aria-label="缩放"><svg><use href="#scale"/></svg></button><button aria-label="拉伸"><svg><use href="#stretch"/></svg></button><button aria-label="修剪"><svg><use href="#trim"/></svg></button><button aria-label="延伸"><svg><use href="#extend"/></svg></button><button aria-label="打断于点"><svg><use href="#brkpt"/></svg></button><button aria-label="打断"><svg><use href="#brk"/></svg></button><button aria-label="合并"><svg><use href="#join"/></svg></button><button aria-label="倒角"><svg><use href="#cham"/></svg></button><button aria-label="圆角"><svg><use href="#fill"/></svg></button><button aria-label="光顺曲线"><svg><use href="#blend"/></svg></button><button aria-label="分解"><svg><use href="#expl"/></svg></button>
    </div>
    <div class="side">
      <i class="hgrip"></i>
      <button aria-label="前置"><svg><use href="#o1"/></svg></button><button aria-label="后置"><svg><use href="#o2"/></svg></button><button aria-label="置于对象之上"><svg><use href="#o3"/></svg></button><button aria-label="置于对象之下"><svg><use href="#o4"/></svg></button><i class="hsep"></i><button aria-label="文字前置"><svg><use href="#o5"/></svg></button><button aria-label="图案填充后置"><svg><use href="#o6"/></svg></button>
    </div>
  </div>
</main>

<section class="cmd">
  <div class="cmd-side"><i class="hgrip"></i><button aria-label="关闭"><svg class="cx"><use href="#x"/></svg></button><button aria-label="自定义"><svg><use href="#wrench2"/></svg></button></div>
  <div class="cmd-main">
    <div class="hist"><p>自动保存到 C:\Users\Administrator\appdata\local\temp\Drawing1_1_2567_0044.sv$ ...</p><p>命令:</p><div class="mark">本课程版权归英老师教室所有，盗版必究！</div></div>
    <div class="prompt"><button aria-label="最近使用的命令"><svg viewBox="0 0 24 16"><path d="M.5 1.500h13v13H.5z" fill="#dfe6ee" stroke="#8a98a8"/><path d="M3 5l4 3-4 3M8 12h4" fill="none" stroke="#234" stroke-width="1.300"/><path d="M18 7h5l-2.500 3z" fill="#777"/></svg></button><input type="text" placeholder="键入命令" aria-label="命令行"></div>
  </div>
</section>

<footer class="foot">
  <div class="ltabs"><button class="on">模型</button><button>布局1</button><button>布局2</button><button class="add" aria-label="新建布局"><svg><use href="#plus"/></svg></button></div>
  <div class="status">
    <div><button aria-label="栅格"><svg viewBox="0 0 16 16"><path d="M3.500 1v14M6.500 1v14M9.500 1v14M12.500 1v14M1 4.500h14M1 8.500h14M1 12.500h14" stroke="#ccc"/></svg></button><button aria-label="捕捉"><svg viewBox="0 0 16 16"><path d="M1 2.500h14M1 5.500h14M1 8.500h14M1 11.500h14M1 14.500h14" stroke="#ccc" stroke-dasharray="1 2"/></svg></button><button class="nar" aria-label="捕捉设置"><svg><use href="#dn"/></svg></button></div>
    <div><button aria-label="动态输入"><svg viewBox="0 0 16 16"><path d="M4.500 0v9M0 4.500h9" stroke="#2a8cf4"/><path d="M6 9h10v5H6z" fill="#2a9cff"/></svg></button></div>
    <div><button aria-label="正交"><svg viewBox="0 0 16 16"><path d="M2.500 1v13.500H15M2.500 9.500h4v5" fill="none" stroke="#ddd" stroke-width="1.200"/></svg></button><button aria-label="极轴"><svg viewBox="0 0 16 16"><circle cx="8" cy="8" r="6.500" fill="none" stroke="#ddd" stroke-width="1.300"/><path d="M8 8h8M8 8l5-6" stroke="#ddd"/></svg></button><button class="nar" aria-label="极轴设置"><svg><use href="#dn"/></svg></button></div>
    <div><button aria-label="对象追踪"><svg viewBox="0 0 16 16"><path d="M2 14L14 2M2 14.500h14" stroke="#ccc"/><path d="M6 8l3 3" stroke="#ccc" stroke-width="2"/></svg></button><button aria-label="对象捕捉"><svg viewBox="0 0 16 16"><path d="M2 2.500h12v12H2z" fill="none" stroke="#2a8cf4" stroke-width="1.500"/><path d="M1 1h4v4H1z" fill="#1ec83a" stroke="#052"/></svg></button><button class="nar" aria-label="对象捕捉设置"><svg><use href="#dn"/></svg></button></div>
    <div><button aria-label="自定义状态栏"><svg viewBox="0 0 16 16"><path d="M1 2.500h14M1 8.500h14M1 14.500h14" stroke="#ddd" stroke-width="1.600"/></svg></button></div>
  </div>
</footer>
</body>
</html>
```
FILE: styles.css
```css
* { box-sizing: border-box; }
body {
  margin: 0;
  min-height: 100vh;
  display: flex;
  flex-direction: column;
  background: #5b5b5b;
  border-top: 5px solid #7cc4ee;
  font-family: "Noto Sans", "Noto Sans CJK SC", sans-serif;
  font-size: 12px;
  line-height: 16px;
  color: #f0f0f0;
}
button, select, input, textarea { font: inherit; color: inherit; margin: 0; padding: 0; border: 0; background: none; border-radius: 0; }
svg { display: block; width: 16px; height: 16px; flex: none; }
.paints { position: absolute; width: 0; height: 0; }
.symbols { display: none; }
i { display: block; flex: none; }
p { margin: 0; }

/* title bar */
.head { display: flex; height: 48px; background: #a3a3a3; border-top: 1px solid #33566e; padding-left: 3px; }
.logo { width: 41px; height: 41px; margin: 3px 5px 0 0; background: linear-gradient(#c4c4c4, #6e6e6e); border: 1px solid #111; }
.logo svg { width: 39px; height: 39px; }
.head-main { flex: 1; display: flex; flex-direction: column; }
.head-top { display: flex; height: 28px; align-items: center; padding-bottom: 2px; }
.qat { display: flex; }
.qat button, .bar button, .side button, .wctl button, .mctl button { display: grid; place-items: center; flex: none; }
.qat button { width: 24px; height: 24px; }
.qat .nar { width: 12px; }
.nar svg { width: 8px; height: 8px; }
.qat .cust { width: 16px; }
.cust svg { width: 12px; height: 12px; }
.title { flex: 1; display: flex; justify-content: center; gap: 20px; padding-right: 14px; }
.wctl { display: flex; padding-right: 3px; color: #fff; }
.wctl button { width: 25px; height: 20px; }
.wctl svg, .mctl svg { width: 12px; height: 12px; }
.head-bottom { display: flex; justify-content: space-between; align-items: center; height: 19px; }
.menu { display: flex; gap: 25px; padding-left: 9px; }
.mctl { display: flex; padding-right: 4px; color: #222; }
.mctl button { width: 17px; height: 16px; }
.mctl svg { width: 11px; height: 11px; }

/* drawing tabs */
.ftabs { display: flex; align-items: flex-end; height: 26px; padding-left: 18px; margin-right: 3px; background: #383838; }
.ftab { display: flex; justify-content: space-between; align-items: center; width: 141px; height: 22px; padding: 0 23px 0 17px; background: linear-gradient(#7a7a7a, #5b5b5b); clip-path: polygon(0 100%, 3% 85%, 6% 15%, 9% 0, 89% 0, 92% 15%, 96% 85%, 100% 100%); }
.ftab svg { width: 8px; height: 8px; color: #444; }
.fnew { width: 28px; height: 15px; margin: 0 0 3px -7px; background: #4c4c4c; border-radius: 8px 8px 6px 4px; display: grid; place-items: center; color: #ccc; }
.fnew svg { width: 10px; height: 10px; }

/* docked toolbars */
.bars { display: flex; flex-direction: column; gap: 3px; padding: 4px 3px; }
.bar-row { display: flex; gap: 1px; }
.bar { display: flex; height: 24px; border: 1px solid #3a3a3a; background: #5b5b5b; }
.bar button { width: 23px; height: 22px; }
.bar .nar { width: 13px; color: #999; }
.bar .dark { color: #444; }
.grip { width: 8px; margin: 2px 0; padding: 0 2px; background: repeating-conic-gradient(#333 0 25%, #666 0 50%) 0 0 / 2px 2px content-box; }
.sep { width: 6px; background: linear-gradient(#444, #444) 2px 0 / 1px 100% no-repeat, linear-gradient(#868686, #868686) 3px 0 / 1px 100% no-repeat; }
.sep.wide { width: 8px; }
.combo { display: flex; align-items: center; height: 22px; color: #111; background: linear-gradient(#fafafa, #d8d8d8); border: 1px solid #f6f6f6; border-radius: 2px; }
.combo select { flex: 1; min-width: 0; height: 20px; appearance: none; background: url("data:image/svg+xml,%3Csvg xmlns='http://www.w3.org/2000/svg' width='8' height='5'%3E%3Cpath d='M0 0h8L4 5z' fill='%23111'/%3E%3C/svg%3E") no-repeat right 2px center; }
.std { width: 118px; }
.std select { padding: 2px 0 0 18px; }
.std.tight select { padding-left: 4px; }
.layer { width: 298px; padding-left: 2px; gap: 1px; }
.layer select { padding-left: 3px; }
.combo .sw { width: 12px; height: 12px; }
.by { font-family: "Liberation Serif", serif; padding-left: 2px; }
.color { width: 148px; padding-left: 4px; }
.color select { padding-left: 3px; }
.ltype { width: 158px; padding-left: 4px; }
.lweight { width: 123px; padding-left: 4px; }
.rule { width: 60px; height: 1px; background: #111; }
.lweight .rule { width: 35px; }
.ltype select, .lweight select { padding-left: 4px; }
.off { width: 118px; background: #fafafa; color: #777; }
.off select { padding-left: 8px; color: #777; opacity: 1; background-image: url("data:image/svg+xml,%3Csvg xmlns='http://www.w3.org/2000/svg' width='8' height='5'%3E%3Cpath d='M0 0h8L4 5z' fill='%23aaa'/%3E%3C/svg%3E"); }

/* workspace */
.work { flex: 1; display: flex; align-items: stretch; padding: 0 6px 3px 3px; }
.side { align-self: flex-start; display: flex; flex-direction: column; width: 25px; border: 1px solid #3a3a3a; border-top: 0; }
.side button { width: 21px; height: 22px; }
.hgrip { width: 16px; height: 5px; margin: 2px 3px; background: repeating-conic-gradient(#2c2c2c 0 25%, #707070 0 50%) 0 0 / 2px 2px; }
.hsep { height: 2px; margin: 2px 1px; background: #e4e4e4; }
.view { flex: 1; min-width: 0; display: grid; grid-template-columns: 1fr 17px; grid-template-rows: 1fr 17px; margin: 0 4px; }
.canvas { position: relative; background: #222632; overflow: hidden; }
.vlabel { padding: 6px 3px; color: #e6e6ea; }
.vscroll, .hscroll { display: flex; align-items: center; background: #f0f0f0; }
.vscroll { flex-direction: column; border-left: 1px solid #dde3ea; }
.hscroll { grid-column: 1 / 3; border-top: 1px solid #fff; padding: 0 22px 0 4px; }
.vscroll svg, .hscroll svg { width: 8px; height: 8px; }
.vscroll svg { margin: 5px 0; }
.vscroll i { width: 14px; height: 15px; border: 1px solid #8a8a8a; background: linear-gradient(90deg, #fafafa, #c8c8c8); }
.vscroll .end { margin-top: auto; }
.hscroll i { width: 15px; height: 15px; margin: 0 5px 0 auto; border: 1px solid #999; background: linear-gradient(#fafafa, #cfcfcf); }
.ucs { position: absolute; left: 14px; bottom: 11px; font: 17px "Liberation Sans", sans-serif; fill: #e8e8ee; }
.ucs svg { width: 80px; height: 76px; }
.side-right { display: flex; flex-direction: column; }

/* input method bar */
.ime { position: absolute; right: 12px; top: 177px; display: flex; align-items: center; justify-content: space-between; width: 147px; height: 22px; padding: 0 6px; background: #f8f8f8; color: #444; }
.ime svg { width: 15px; height: 15px; }
.ime span { font-size: 13px; }
.ime .wu { width: 16px; font-size: 12px; line-height: 14px; text-align: center; border: 1px solid #d66; color: #222; }
.ime .wr { width: 13px; height: 13px; color: #555; }

/* notepad window */
.note { position: absolute; left: 410px; top: 113px; width: 824px; height: 544px; display: flex; flex-direction: column; padding: 0 7px 7px; background: linear-gradient(#9db9d6, #b4cde8 30px, #bcd4ee 60px, #c4dcf4 116px, #b4d2ee 118px, #b2d4ef); border: 1px solid #eef6fc; border-bottom-color: #6fc6e6; border-right-color: #6fc6e6; border-radius: 6px 6px 0 0; box-shadow: 0 0 0 1px #111722; color: #111; }
.note-head { display: flex; align-items: center; gap: 2px; height: 28px; padding: 5px 1px 0 3px; }
.note-head h1 { flex: 1; margin: 0 0 0 2px; font-size: 12px; font-weight: 400; }
.note-head .pad { width: 14px; height: 16px; }
.note-head button { width: 31px; height: 17px; margin-top: -2px; display: grid; place-items: center; border: 1px solid #4f6f96; border-radius: 2px; background: linear-gradient(#c6d8ec 48%, #9bb6d4 50%, #b8d0ea); }
.note-head button svg { width: 14px; height: 12px; }
.note-head .close { border-color: #4c1518; background: linear-gradient(#dc9a8e 48%, #c0402c 50%, #d8695a); }
.note-menu { display: flex; gap: 15px; height: 20px; padding: 0 0 0 6px; background: linear-gradient(#fbfbfe, #dfe3f2 45%, #dfe4f3); border-bottom: 1px solid #a9aebb; }
.note-body { position: relative; flex: 1; display: flex; background: #fff; border-top: 1px solid #5c7ca8; }
.note-body textarea { flex: 1; resize: none; outline: 0; padding: 2px; background: #fff; }
.note-scroll { width: 17px; display: flex; flex-direction: column; justify-content: space-between; align-items: center; padding: 6px 0; background: #efefef; border-left: 1px solid #e2e2e2; }
.note-scroll svg { width: 8px; height: 6px; }
.caret { position: absolute; left: 2px; top: 2px; width: 1px; height: 20px; background: #000; }
.ibeam { position: absolute; left: 847px; top: 396px; width: 9px; height: 18px; }

/* command line */
.cmd { display: flex; margin: 0 4px 0 3px; border-top: 1px solid #777; }
.cmd-side { width: 23px; display: flex; flex-direction: column; align-items: center; gap: 7px; background: linear-gradient(#8a8a8a, #3c3c3c); color: #f4f4f4; }
.cmd-side .hgrip { margin: 4px 0 0; background: repeating-conic-gradient(#777 0 25%, #aaa 0 50%) 0 0 / 2px 2px; }
.cmd-side button:last-child { margin-top: 3px; }
.cmd-side svg { width: 13px; height: 13px; }
.cmd-side .cx { width: 10px; height: 10px; }
.cmd-main { flex: 1; color: #111; }
.hist { position: relative; height: 33px; padding: 2px 2px 0; background: #c8c8c8; border-bottom: 1px solid #777; font-family: "Liberation Mono", "Noto Sans CJK SC", monospace; line-height: 15px; }
.mark { position: absolute; right: 46px; top: -5px; font: 700 31px/34px "Noto Sans CJK SC", sans-serif; color: #505050; white-space: nowrap; }
.prompt { display: flex; align-items: center; gap: 8px; height: 23px; padding: 0 0 2px 5px; background: #fff; }
.prompt svg { width: 24px; height: 16px; }
.prompt input { flex: 1; outline: 0; }
.prompt input::placeholder { color: #9a9a9a; opacity: 1; font-style: italic; }

/* layout tabs and status bar */
.foot { display: flex; justify-content: space-between; height: 31px; margin: 0 3px; background: #383838; border-top: 1px solid #666; border-bottom: 3px solid #4a4a4a; }
.ltabs { display: flex; padding-left: 10px; color: #b4b4b4; }
.ltabs button { height: 18px; width: 54px; background: #505050; clip-path: polygon(0 0, 100% 0, 88% 100%, 12% 100%); }
.ltabs .on { width: 49px; background: #7c7c7c; color: #fff; font-weight: 700; }
.ltabs .add { width: 30px; display: grid; place-items: center; clip-path: none; border-radius: 4px 4px 10px 8px; }
.ltabs .add svg { width: 9px; height: 9px; }
.status { display: flex; background: #4c4c4c; }
.status div { display: flex; align-items: center; padding: 0 1px 2px; border-left: 1px solid #777; }
.status button { width: 23px; height: 24px; display: grid; place-items: center; }
.status .nar { width: 16px; color: #fff; }
```
